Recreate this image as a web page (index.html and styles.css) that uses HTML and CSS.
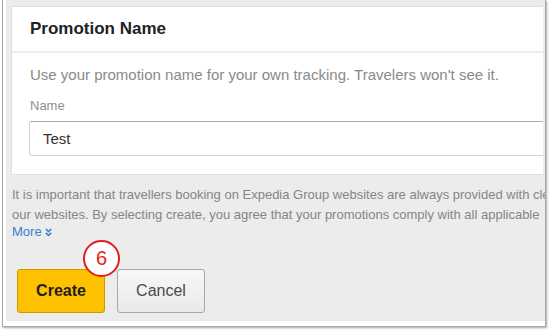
FILE: index.html
```html
<html>
<head>
<link rel="stylesheet" href="styles.css">
</head>
<body>
<div class="frame">
  <div class="page">
    <div class="card">
      <div class="card-head">Promotion Name</div>
      <div class="card-body">
        <p class="hint">Use your promotion name for your own tracking. Travelers won't see it.</p>
        <label class="label">Name</label>
        <div class="input">Test</div>
      </div>
    </div>

    <p class="legal">It is important that travellers booking on Expedia Group websites are always provided with clear<br/>our websites. By selecting create, you agree that your promotions comply with all applicable</p>
    <a class="more" href="#">More <svg width="7" height="9" viewBox="0 0 7 9"><path d="M0.8 1 L3.5 3.6 L6.2 1 M0.8 4.8 L3.5 7.4 L6.2 4.8" fill="none" stroke="#3b7fd0" stroke-width="1.6"/></svg></a>

    <div class="actions">
      <button class="btn btn-create">Create<span class="step">6</span></button>
      <button class="btn btn-cancel">Cancel</button>
    </div>
  </div>
</div>
</body>
</html>
```

FILE: styles.css
```css
/* screenshot frame around the form */
body {margin: 0; background-color: #ffffff; font-family: "Liberation Sans", Arial, sans-serif;}
.frame {box-sizing: border-box; width: 544px; height: 327px; margin-left: 2px; padding: 0 0 5px 3px; border: 1px solid #a8a8a8; border-top: none; box-shadow: 1px 1px 2px rgba(0,0,0,0.35);}
.page {height: 321px; padding: 6px 0 0 5px; box-sizing: border-box; background-color: #ececec; overflow: hidden;}

.card {background-color: #ffffff; border: 1px solid #e0e0e0; border-right: none; margin-right: 2px; overflow: hidden;}
.card-head {height: 46px; box-sizing: border-box; padding: 12px 0 0 18px; font-size: 17px; line-height: 20px; font-weight: bold; color: #222222; border-bottom: 2px solid #eeeeee;}
.card-body {padding: 13px 0 18px 18px;}
.hint {margin: 0; font-size: 15px; line-height: 18px; color: #8a8a8a; white-space: nowrap;}
.label {display: block; margin-top: 14px; font-size: 13px; line-height: 16px; color: #8f8f8f;}
.input {box-sizing: border-box; width: 600px; height: 35px; margin: 7px 0 0 -1px; padding: 0 13px; font-size: 15px; line-height: 33px; color: #333333; border: 1px solid #d2d2d2; border-top-color: #a9a9a9; border-radius: 3px;}

.legal {margin: 10px 0 0 1px; font-size: 13px; line-height: 20px; color: #858585; white-space: nowrap;}
.more {display: block; margin-left: 1px; font-size: 13px; line-height: 14px; color: #3b7fd0; text-decoration: none;}
.more svg {vertical-align: -1px;}

.actions {display: flex; gap: 12px; margin: 30px 0 0 6px;}
.btn {position: relative; box-sizing: border-box; width: 88px; height: 44px; border-radius: 3px; font-family: inherit; font-size: 16px; padding: 0;}
.btn-create {background-color: #fdc100; border: 1px solid #c99c00; font-weight: bold; color: #1e1e1e;}
.btn-cancel {background: linear-gradient(#f7f7f7, #e9e9e9); border: 1px solid #a9a9a9; color: #4a4a4a;}

/* numbered callout */
.step {position: absolute; left: 65px; top: -30px; box-sizing: border-box; width: 37px; height: 37px; border: 2px solid #e41e1e; border-radius: 50%; background-color: #ffffff; color: #e41e1e; font-size: 20px; font-weight: normal; line-height: 33px; text-align: center;}
```
